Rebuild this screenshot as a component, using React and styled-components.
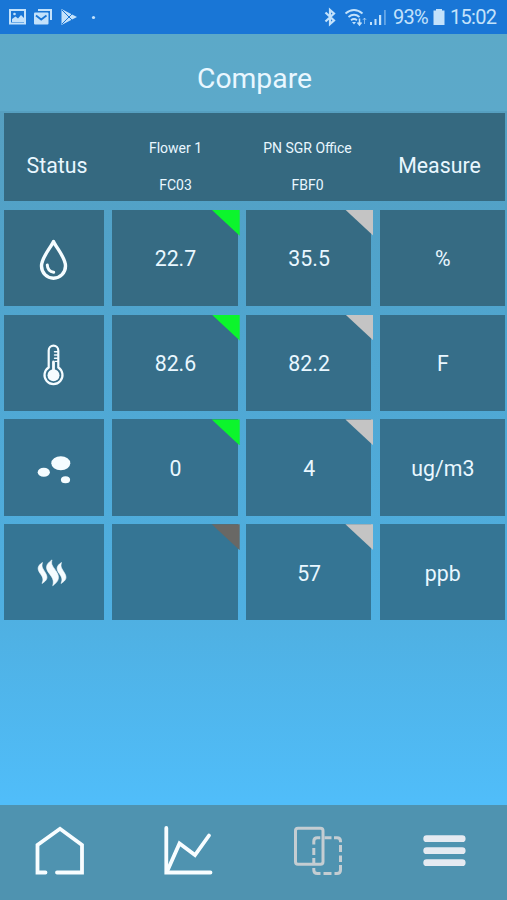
import React from 'react'
import styled, { createGlobalStyle } from 'styled-components';

const GlobalStyle = createGlobalStyle`
  * {
    box-sizing:border-box;
  }

  body {
    margin:0;
    font-family:Roboto, "Liberation Sans", sans-serif;
    color:#e9f7ff;
  }
`;

const StyledScreen = styled.div`
  width:507px;
  height:900px;
  display:flex;
  flex-direction:column;
  overflow:hidden;
  background:linear-gradient(#569fc0 110px, #50a3cb 260px, #4fb0e2 620px, #50bdf9 800px);
`;

const StyledStatusBar = styled.header`
  height:34px;
  flex:none;
  padding:0 10px 0 8px;
  display:flex;
  align-items:center;
  justify-content:space-between;
  background-color:#1976d6;
  color:#c3e2fb;
`;

const StyledStatusIcon = styled.svg`
  display:block;
  flex:none;
  margin-left:${({ $gap }) => $gap || 0}px;
`;

const StyledStatusGroup = styled.div`
  display:flex;
  align-items:center;
`;

const StyledStatusText = styled.span`
  display:block;
  width:${({ $width }) => $width}px;
  margin-left:${({ $gap }) => $gap}px;
  font-size:20px;
  letter-spacing:-0.7px;
  line-height:35px;
  white-space:nowrap;
`;

const StyledTitle = styled.h1`
  height:77px;
  flex:none;
  margin:0;
  padding:0 0 0 2px;
  font-size:28.3px;
  font-weight:400;
  line-height:90px;
  text-align:center;
  background:linear-gradient(#5ca9c8, #5ca9ca);
`;

const StyledTable = styled.main`
  flex:1;
  padding:2px 2px 0 3.5px;
  display:flex;
  flex-direction:column;
  gap:8.5px;
`;

const StyledHeadRow = styled.section`
  height:88.3px;
  display:grid;
  grid-template-columns:107px 130px 134px 130px;
  background-color:#356980;
`;

const StyledHeadCell = styled.div`
  display:flex;
  align-items:center;
  justify-content:center;
  padding-top:17px;
  font-size:21.3px;
`;

const StyledSensorHead = styled.div`
  display:flex;
  flex-direction:column;
  align-items:center;
  padding-top:25px;
  gap:16.5px;
  font-size:14px;
  line-height:20px;
  white-space:nowrap;
`;

const StyledRow = styled.section`
  height:96.3px;
  display:grid;
  grid-template-columns:100.5px 125.5px 125.5px 125.5px;
  column-gap:8.2px;
`;

const StyledCell = styled.div`
  position:relative;
  display:flex;
  align-items:center;
  justify-content:center;
  padding:2px 0 0 1px;
  font-size:21.3px;
  background-color:${({ $bg }) => $bg};
`;

const StyledCorner = styled.span`
  position:absolute;
  top:0;
  right:-2px;
  width:28px;
  height:26px;
  background-color:${({ $color }) => $color};
  clip-path:polygon(0 0, 100% 0, 100% 100%);
`;

const StyledNav = styled.nav`
  height:95px;
  flex:none;
  padding-bottom:3px;
  display:grid;
  grid-template-columns:120px 136px 121px 130px;
  background-color:#4f93b0;
`;

const StyledNavButton = styled.button`
  display:flex;
  align-items:center;
  justify-content:center;
  padding:0;
  border:0;
  background:none;
`;

const DropIcon = () => (
    <svg width="40" height="46" viewBox="0 0 40 46" fill="none" stroke="#f5fcff" strokeLinecap="round" strokeLinejoin="round">
        <path d="M19.5 5.500C16.500 12 7.500 21.500 7.500 30a12 12.200 0 0 0 24 0C31.500 21.500 22.500 12 19.500 5.500Z" strokeWidth="3.400" />
        <path d="M13.300 29c.2 4 2.400 6.700 6.400 7.300" strokeWidth="3" />
    </svg>
)

const ThermometerIcon = () => (
    <svg width="40" height="46" viewBox="0 0 40 46" fill="none" stroke="#f5fcff" strokeLinecap="round">
        <path d="M14.700 26.500V9.500a4.800 4.800 0 0 1 9.600 0v17a9 9 0 1 1-9.600 0Z" strokeWidth="2.200" />
        <circle cx="19.500" cy="34.200" r="6" fill="#f5fcff" stroke="none" />
        <path d="M19.500 21v10" strokeWidth="2.800" />
        <path d="M20.500 10.800H24M20.500 14H24M20.500 17.200H24M21.500 20.400H24" strokeWidth="1.400" />
    </svg>
)

const ParticlesIcon = () => (
    <svg width="40" height="46" viewBox="0 0 40 46" fill="#f5fcff">
        <ellipse cx="26.800" cy="17.300" rx="9.500" ry="7" />
        <ellipse cx="9.800" cy="26.300" rx="6.100" ry="4.500" />
        <ellipse cx="31.500" cy="33.800" rx="4.600" ry="3.500" />
    </svg>
)

const VapourIcon = () => (
    <svg width="40" height="46" viewBox="0 0 40 46" fill="#f5fcff" stroke="#f5fcff" strokeWidth=".6">
        <path d="M8.500 12.500c-5.500 3.500-5.300 6.800-2.300 11 2.300 3.300 3.800 5.500 1.800 10 5.700-3.400 6-6.300 3.400-10.700-2.500-4.200-4.300-6-2.900-10.300Z" />
        <path d="M18 9.900c-6.600 4.400-6.700 8.200-3 13.300 2.900 4 5.500 6.700 3.700 12.500 6.400-4.700 7.100-8.200 4-13.600-3-5.200-6.300-7-4.700-12.200Z" />
        <path d="M27.500 12.500c-5.500 3.500-5.300 6.800-2.300 11 2.300 3.300 3.800 5.500 1.800 10 5.700-3.400 6-6.300 3.400-10.700-2.500-4.200-4.300-6-2.900-10.300Z" />
    </svg>
)

const HomeIcon = () => (
    <svg width="52" height="52" viewBox="0 0 52 52" fill="none" stroke="#f8fdff" strokeWidth="3.800" strokeLinecap="round">
        <path d="M11.500 47.500H3.500V20L26 3.800 48 20v27.500H23" strokeLinejoin="miter" />
    </svg>
)

const ChartIcon = () => (
    <svg width="52" height="52" viewBox="0 0 52 52" fill="none" stroke="#f8fdff" strokeWidth="3.800" strokeLinecap="round">
        <path d="M4.300 3v44.500H48.500" />
        <path d="M5.500 45.500 17.500 18.500 33 30 47 10.500" />
    </svg>
)

const CompareIcon = () => (
    <svg width="52" height="52" viewBox="0 0 52 52" fill="none" stroke="#c4cdd2" strokeWidth="3">
        <rect x="4.500" y="3.200" width="27.500" height="36" rx="2.500" />
        <path d="M22.800 19.500v-3.200q0-3.500 3.500-3.500h3M33.500 12.800h7M43 12.800h3q3.500 0 3.500 3.500v1M49.500 20v7M49.500 30.500v6.500M49.500 40v5q0 3.500-3.500 3.500h-2.500M40.500 48.500h-8M29.500 48.500h-3.200q-3.500 0-3.500-3.500v-2M22.800 40v-7M22.800 30v-7" />
    </svg>
)

const MenuIcon = () => (
    <svg width="52" height="52" viewBox="0 0 52 52" stroke="#e5eaf1" strokeWidth="6.800" strokeLinecap="round">
        <path d="M10.700 13.700h35.500M10.700 25.700h35.500M10.700 37.700h35.500" />
    </svg>
)

const GREEN = '#0cf52c';
const GREY = '#c4c4c4';
const DARK = '#696865';

const rows = [
    { icon: <DropIcon />, bg: '#366b83', first: '22.7', second: '35.5', unit: '%', corner: GREEN },
    { icon: <ThermometerIcon />, bg: '#366e89', first: '82.6', second: '82.2', unit: 'F', corner: GREEN },
    { icon: <ParticlesIcon />, bg: '#36718e', first: '0', second: '4', unit: 'ug/m3', corner: GREEN },
    { icon: <VapourIcon />, bg: '#357594', first: '', second: '57', unit: 'ppb', corner: DARK },
];

const StatusBar = () => (
    <StyledStatusBar>
        <StyledStatusGroup>
            <StyledStatusIcon width="19" height="18" viewBox="0 0 19 18">
                <rect x="2" y="2" width="15" height="13.500" fill="none" stroke="currentColor" strokeWidth="2" />
                <path d="M4 14v-3l3.500-2.500 2.500 2 3-3.500 3 3v4Z" fill="currentColor" />
                <circle cx="6.500" cy="6" r="1.300" fill="currentColor" />
            </StyledStatusIcon>
            <StyledStatusIcon $gap={6} width="20" height="18" viewBox="0 0 20 18">
                <path d="M5 2h13v10" fill="none" stroke="currentColor" strokeWidth="2" />
                <rect x="1" y="4.500" width="14.500" height="12" rx="1" fill="currentColor" />
                <path d="m3 7.500 5.200 4 5.300-4" fill="none" stroke="#1976d6" strokeWidth="1.800" />
            </StyledStatusIcon>
            <StyledStatusIcon $gap={7} width="18" height="18" viewBox="0 0 18 18">
                <path d="M1.500 1 17 9 1.500 17Z" fill="currentColor" />
                <path d="m2 2 10.500 10.500M2 16 12.500 5.500" stroke="#1976d6" strokeWidth="1" />
            </StyledStatusIcon>
            <StyledStatusIcon $gap={13} width="5" height="5" viewBox="0 0 5 5">
                <circle cx="2.500" cy="2.500" r="1.600" fill="currentColor" />
            </StyledStatusIcon>
        </StyledStatusGroup>
        <StyledStatusGroup>
            <StyledStatusIcon width="13" height="20" viewBox="0 0 13 20">
                <path d="m1.500 5.500 8.500 8-4 3.500V3l4 3.500-8.500 8" fill="none" stroke="currentColor" strokeWidth="2.200" />
            </StyledStatusIcon>
            <StyledStatusIcon $gap={7} width="23" height="20" viewBox="0 0 23 20">
                <path d="M1.500 6.500q8.500-7 17 0M4.500 10q5.500-4.500 11 0M7 13.300q3-2.500 6 0" fill="none" stroke="currentColor" strokeWidth="1.800" />
                <path d="m8 15 2 2.500 2-2.500Z" fill="currentColor" />
                <path d="M15.500 11.500v6M13.500 15.500l2 2.500 2-2.500" fill="none" stroke="currentColor" strokeWidth="1.500" />
                <path d="M20.500 17v-6M18.800 13l1.700-2 1.700 2" fill="none" stroke="currentColor" strokeWidth="1" opacity=".6" />
            </StyledStatusIcon>
            <StyledStatusIcon $gap={2} width="18" height="20" viewBox="0 0 18 20" fill="currentColor">
                <path d="M1 15h2v3H1ZM5.500 12h2v6h-2ZM10 8h2.200v10H10Z" />
                <path d="M15 3h1.800v15H15Z" opacity=".45" />
            </StyledStatusIcon>
            <StyledStatusText $gap={6} $width={34}>93%</StyledStatusText>
            <StyledStatusIcon $gap={6} width="12" height="18" viewBox="0 0 12 18">
                <path d="M3 1h6v1.500h2.500v14.500H.5V2.500H3Z" fill="currentColor" />
            </StyledStatusIcon>
            <StyledStatusText $gap={5} $width={47}>15:02</StyledStatusText>
        </StyledStatusGroup>
    </StyledStatusBar>
)

const CompareRow = ({ row }) => (
    <StyledRow>
        <StyledCell $bg={row.bg}>{row.icon}</StyledCell>
        <StyledCell $bg={row.bg}>
            {row.first}
            <StyledCorner $color={row.corner} />
        </StyledCell>
        <StyledCell $bg={row.bg}>
            {row.second}
            <StyledCorner $color={GREY} />
        </StyledCell>
        <StyledCell $bg={row.bg}>{row.unit}</StyledCell>
    </StyledRow>
)

const App = () => {
    return (
        <>
            <GlobalStyle />
            <StyledScreen>
                <StatusBar />
                <StyledTitle>Compare</StyledTitle>
                <StyledTable>
                    <StyledHeadRow>
                        <StyledHeadCell>Status</StyledHeadCell>
                        <StyledSensorHead>
                            <span>Flower 1</span>
                            <span>FC03</span>
                        </StyledSensorHead>
                        <StyledSensorHead>
                            <span>PN SGR Office</span>
                            <span>FBF0</span>
                        </StyledSensorHead>
                        <StyledHeadCell>Measure</StyledHeadCell>
                    </StyledHeadRow>
                    {rows.map((row) => <CompareRow key={row.unit} row={row} />)}
                </StyledTable>
                <StyledNav>
                    <StyledNavButton aria-label="Home"><HomeIcon /></StyledNavButton>
                    <StyledNavButton aria-label="Chart"><ChartIcon /></StyledNavButton>
                    <StyledNavButton aria-label="Compare"><CompareIcon /></StyledNavButton>
                    <StyledNavButton aria-label="Menu"><MenuIcon /></StyledNavButton>
                </StyledNav>
            </StyledScreen>
        </>
    )
}

export default App
